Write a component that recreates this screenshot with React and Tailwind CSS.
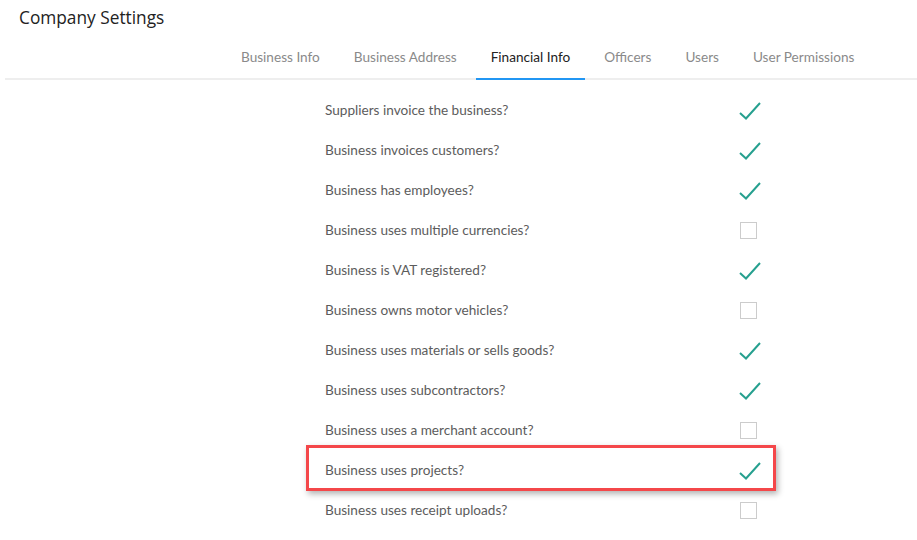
const tabs = ['Business Info', 'Business Address', 'Financial Info', 'Officers', 'Users', 'User Permissions'];

const questions = [
  ['Suppliers invoice the business?', true],
  ['Business invoices customers?', true],
  ['Business has employees?', true],
  ['Business uses multiple currencies?', false],
  ['Business is VAT registered?', true],
  ['Business owns motor vehicles?', false],
  ['Business uses materials or sells goods?', true],
  ['Business uses subcontractors?', true],
  ['Business uses a merchant account?', false],
  ['Business uses projects?', true],
  ['Business uses receipt uploads?', false],
];

const Tick = () => (
  <svg width="24" height="20" viewBox="0 0 24 20" className="text-[#26a08f]">
    <path d="M2 13 L8 18.5 L22 3" fill="none" stroke="currentColor" strokeWidth="2" />
  </svg>
);

const App = () => {
  return (
    <div className="min-h-screen w-[917px] bg-white" style={{ fontFamily: 'Lato, "Open Sans", sans-serif' }}>
      <div className="pl-[19px] pt-[8px] text-[17.3px] leading-[20px] text-[#222]" style={{ fontFamily: '"Open Sans", Lato, sans-serif' }}>
        Company Settings
      </div>

      <div className="ml-[5px] mt-[18px] flex border-b-2 border-[#eeeeee] pl-[219px]">
        {tabs.map((tab) => {
          const active = tab === 'Financial Info';
          return (
            <div
              key={tab}
              className={`-mb-[2px] mx-[2px] border-b-2 px-[15px] pb-[12px] pt-[2px] text-[13.6px] leading-[18px] ${
                active ? 'border-[#2196f3] text-[#222]' : 'border-transparent text-[#8a8a8a]'
              }`}
            >
              {tab}
            </div>
          );
        })}
      </div>

      <div className="ml-[306px] mt-[10px] flex w-[470px] flex-col">
        {questions.map(([label, checked], i) => (
          <div key={label} className="relative flex h-10 items-center justify-between pl-[19px] pr-[14px]">
            {i === 9 && (
              <div className="pointer-events-none absolute -top-[5px] -bottom-[1px] left-0 right-0 border-[3px] border-[#f4474a] shadow-[2px_3px_6px_rgba(0,0,0,0.3)]" />
            )}
            <span className="text-[13.6px] text-[#5c5c5c]">{label}</span>
            {checked ? (
              <Tick />
            ) : (
              <div className="mr-[5px] h-[17px] w-[17px] border border-[#cccccc] bg-white" />
            )}
          </div>
        ))}
      </div>
    </div>
  );
};

export default App;
